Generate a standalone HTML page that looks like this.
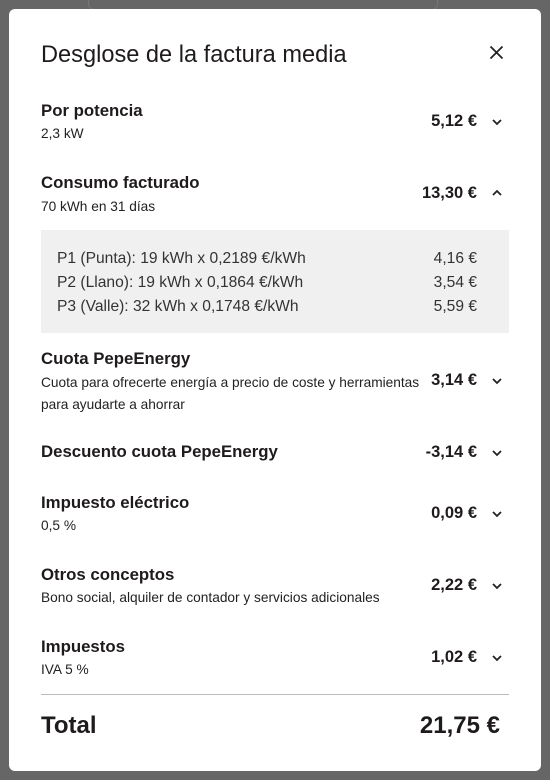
<!DOCTYPE html>
<html><head><meta charset="utf-8"><style>
*{margin:0;padding:0;box-sizing:border-box}
body{width:550px;height:780px;background:#666;position:relative;overflow:hidden;font-family:"Liberation Sans",sans-serif;color:#1f1b1c}
.bg1{position:absolute;left:88px;top:-10px;width:350px;height:20px;border:1px solid #777;border-radius:6px}
.modal{position:absolute;left:9px;top:9px;width:532px;height:762px;background:#fff;border-radius:6px}
.t{position:absolute;white-space:nowrap;line-height:1}
.h{font-size:23.6px;}
.r{font-size:16.8px;font-weight:bold}
.s{font-size:13.7px;color:#222}
.a{font-size:16.5px;font-weight:bold;right:73px}
.ch{position:absolute;left:491px;width:12px;height:8px}
.box{position:absolute;left:41px;top:230px;width:468px;height:103px;background:#f0f0f0}
.d{font-size:15.6px;color:#333}
.dr{right:73px;font-size:15.6px;color:#333}
</style></head><body>
<div class="bg1"></div>
<div class="modal"></div>
<div class="t h" style="left:41px;top:44px">Desglose de la factura media</div>
<svg style="position:absolute;left:489px;top:45px" width="15" height="15" viewBox="0 0 15 15"><path d="M1.5 1.5L13.5 13.5M13.5 1.5L1.5 13.5" stroke="#222" stroke-width="1.8"/></svg>

<div class="t r" style="left:41px;top:103px">Por potencia</div>
<div class="t s" style="left:41px;top:127px">2,3 kW</div>
<div class="t a" style="top:113px">5,12 €</div>
<svg class="ch" style="top:118px" viewBox="0 0 12 8"><path d="M2 2L6 6L10 2" stroke="#222" stroke-width="1.8" fill="none"/></svg>

<div class="t r" style="left:41px;top:175px">Consumo facturado</div>
<div class="t s" style="left:41px;top:200px">70 kWh en 31 días</div>
<div class="t a" style="top:185px">13,30 €</div>
<svg class="ch" style="top:189px" viewBox="0 0 12 8"><path d="M2 6L6 2L10 6" stroke="#222" stroke-width="1.8" fill="none"/></svg>

<div class="box"></div>
<div class="t d" style="left:57px;top:251px">P1 (Punta): 19 kWh x 0,2189 €/kWh</div>
<div class="t d" style="left:57px;top:275px">P2 (Llano): 19 kWh x 0,1864 €/kWh</div>
<div class="t d" style="left:57px;top:299px">P3 (Valle): 32 kWh x 0,1748 €/kWh</div>
<div class="t dr" style="top:251px">4,16 €</div>
<div class="t dr" style="top:275px">3,54 €</div>
<div class="t dr" style="top:299px">5,59 €</div>

<div class="t r" style="left:41px;top:351px">Cuota PepeEnergy</div>
<div class="t s" style="left:41px;top:376px">Cuota para ofrecerte energía a precio de coste y herramientas</div>
<div class="t s" style="left:41px;top:398px">para ayudarte a ahorrar</div>
<div class="t a" style="top:372px">3,14 €</div>
<svg class="ch" style="top:377px" viewBox="0 0 12 8"><path d="M2 2L6 6L10 2" stroke="#222" stroke-width="1.8" fill="none"/></svg>

<div class="t r" style="left:41px;top:444px">Descuento cuota PepeEnergy</div>
<div class="t a" style="top:444px">-3,14 €</div>
<svg class="ch" style="top:449px" viewBox="0 0 12 8"><path d="M2 2L6 6L10 2" stroke="#222" stroke-width="1.8" fill="none"/></svg>

<div class="t r" style="left:41px;top:495px">Impuesto eléctrico</div>
<div class="t s" style="left:41px;top:519px">0,5 %</div>
<div class="t a" style="top:505px">0,09 €</div>
<svg class="ch" style="top:510px" viewBox="0 0 12 8"><path d="M2 2L6 6L10 2" stroke="#222" stroke-width="1.8" fill="none"/></svg>

<div class="t r" style="left:41px;top:567px">Otros conceptos</div>
<div class="t s" style="left:41px;top:591px">Bono social, alquiler de contador y servicios adicionales</div>
<div class="t a" style="top:577px">2,22 €</div>
<svg class="ch" style="top:582px" viewBox="0 0 12 8"><path d="M2 2L6 6L10 2" stroke="#222" stroke-width="1.8" fill="none"/></svg>

<div class="t r" style="left:41px;top:639px">Impuestos</div>
<div class="t s" style="left:41px;top:663px">IVA 5 %</div>
<div class="t a" style="top:649px">1,02 €</div>
<svg class="ch" style="top:654px" viewBox="0 0 12 8"><path d="M2 2L6 6L10 2" stroke="#222" stroke-width="1.8" fill="none"/></svg>

<div style="position:absolute;left:41px;top:694px;width:468px;height:1px;background:#bbb"></div>
<div class="t" style="left:41px;top:714px;font-size:24px;font-weight:bold">Total</div>
<div class="t" style="right:50px;top:714px;font-size:24px;font-weight:bold">21,75 €</div>
</body></html>
